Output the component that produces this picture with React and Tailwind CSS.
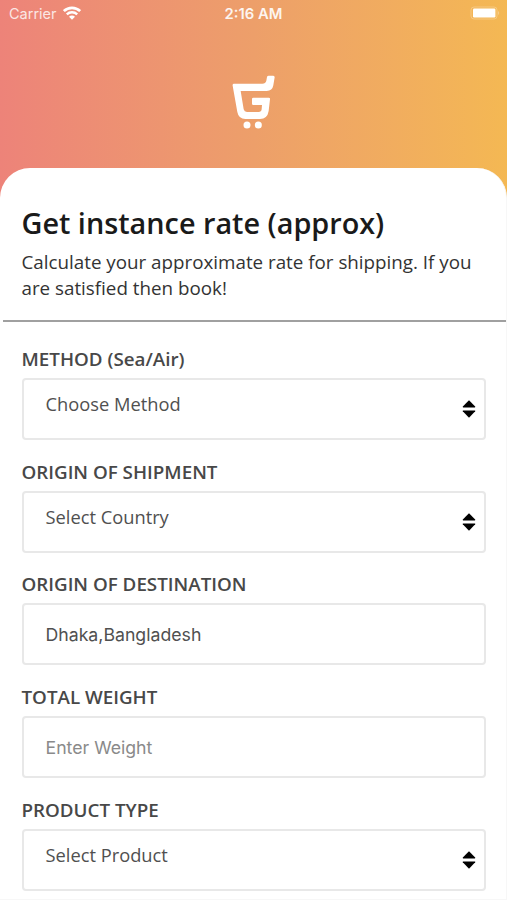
import React from 'react';

const fields = [
  { label: 'METHOD (Sea/Air)', text: 'Choose Method', type: 'select' },
  { label: 'ORIGIN OF SHIPMENT', text: 'Select Country', type: 'select' },
  { label: 'ORIGIN OF DESTINATION', text: 'Dhaka,Bangladesh', type: 'input' },
  { label: 'TOTAL WEIGHT', text: 'Enter Weight', type: 'placeholder' },
  { label: 'PRODUCT TYPE', text: 'Select Product', type: 'select' },
];

const WifiIcon = () => (
  <svg viewBox="0 0 18 14" className="w-[18px] h-[14px] -mt-[2px]" fill="none" stroke="white">
    <path d="M0.8 5.1a11.8 11.8 0 0 1 16.4 0" strokeWidth="2.8" />
    <path d="M3.8 8.3a7.5 7.5 0 0 1 10.4 0" strokeWidth="2.4" />
    <path d="M9 13.8L6 10.8a4.2 4.2 0 0 1 6 0z" fill="white" stroke="none" />
  </svg>
);

const BatteryIcon = () => (
  <svg viewBox="0 0 30 14" className="w-[30px] h-[14px] -mt-[2px]">
    <rect x="1" y="1" width="26" height="12" rx="3" fill="none" stroke="white" strokeOpacity="0.25" />
    <rect x="3" y="2.6" width="22.4" height="8.8" rx="1.2" fill="white" />
    <path d="M28 5v4c1.6-.6 1.6-3.4 0-4z" fill="white" fillOpacity="0.3" />
  </svg>
);

const Logo = () => (
  <svg viewBox="56 44 130 162" className="w-[43.33px] h-[54px]" fill="white">
    <path d="M62 70H147Q157 70 159 61L161 50Q162 46 166 46H180Q184 46 184 51L180 75Q177 92 160 92H82L91 147Q93 155 101 155H136Q144 155 145 147L146 134H120Q116 134 116 130V116Q116 112 120 112H166Q171 112 170 117L166 152Q162 176 140 176H96Q76 176 72 155L58 76Q57 70 62 70Z" />
    <circle cx="101" cy="194" r="10.5" />
    <circle cx="135" cy="194" r="10.5" />
  </svg>
);

const SortIcon = () => (
  <svg viewBox="0 0 14 18" className="w-[14px] h-[18px]" fill="black">
    <path d="M7 0.3L13.2 6.6Q13.6 7.4 12.8 7.4H1.2Q0.4 7.4 0.8 6.6Z" />
    <path d="M7 17.7L13.2 11.2Q13.6 10.4 12.8 10.4H1.2Q0.4 10.4 0.8 11.2Z" />
  </svg>
);

const Field = ({ label, text, type }) => (
  <div className="h-[112.7px]">
    <div className="h-[32px] text-[18.8px] leading-[26px] font-semibold text-[#484848]">{label}</div>
    <div className="h-[62px] border-2 border-[#e8e8e8] rounded-[4px] pl-[22px] pr-[8px] flex items-center justify-between">
      {type === 'select' && (
        <>
          <span className="text-[18.3px] leading-[26px] text-[#505050] pb-[10px]">{text}</span>
          <SortIcon />
        </>
      )}
      {type === 'input' && (
        <span className="font-['Inter','Liberation_Sans',sans-serif] text-[17.7px] text-[#505050] pt-[2px]">{text}</span>
      )}
      {type === 'placeholder' && (
        <span className="font-['Inter','Liberation_Sans',sans-serif] text-[17.7px] text-[#8a8a8a] pt-[2px]">{text}</span>
      )}
    </div>
  </div>
);

const App = () => {
  return (
    <div className="w-full h-[900px] overflow-hidden flex flex-col bg-linear-to-r from-[#ed8379] via-[#ed9f6a] to-[#f4b853] font-['Open_Sans','Noto_Sans',sans-serif]">
      {/* Status bar */}
      <div className="h-[28px] shrink-0 grid grid-cols-3 items-center pl-[9px] pr-[7px] text-white font-['Inter','Liberation_Sans',sans-serif] text-[14.5px]">
        <div className="flex items-center gap-[6px]">
          <span className="opacity-80">Carrier</span>
          <WifiIcon />
        </div>
        <div className="text-center text-[14.8px] font-semibold opacity-90 -ml-[2px]">2:16 AM</div>
        <div className="flex justify-end">
          <BatteryIcon />
        </div>
      </div>

      {/* Logo */}
      <div className="h-[140px] shrink-0 flex justify-center pt-[47px]">
        <Logo />
      </div>

      {/* Rate form */}
      <div className="flex-1 bg-white rounded-t-[30px] border-r border-b border-[#f7f7f7] overflow-hidden">
        <div className="px-[21.5px] pt-[35px] h-[152px]">
          <h1 className="text-[28.8px] leading-[40px] font-semibold text-[#1a1a1a] whitespace-nowrap">Get instance rate (approx)</h1>
          <p className="mt-[7px] text-[18.8px] leading-[25.5px] text-[#333] whitespace-nowrap">
            Calculate your approximate rate for shipping. If you<br />are satisfied then book!
          </p>
        </div>
        <div className="ml-[3px] -mr-px h-[2px] bg-[#a0a0a0]" />
        <div className="pl-[21.5px] pr-[20px] pt-[24px]">
          {fields.map((field) => (
            <Field key={field.label} {...field} />
          ))}
        </div>
      </div>
    </div>
  );
};

export default App;
